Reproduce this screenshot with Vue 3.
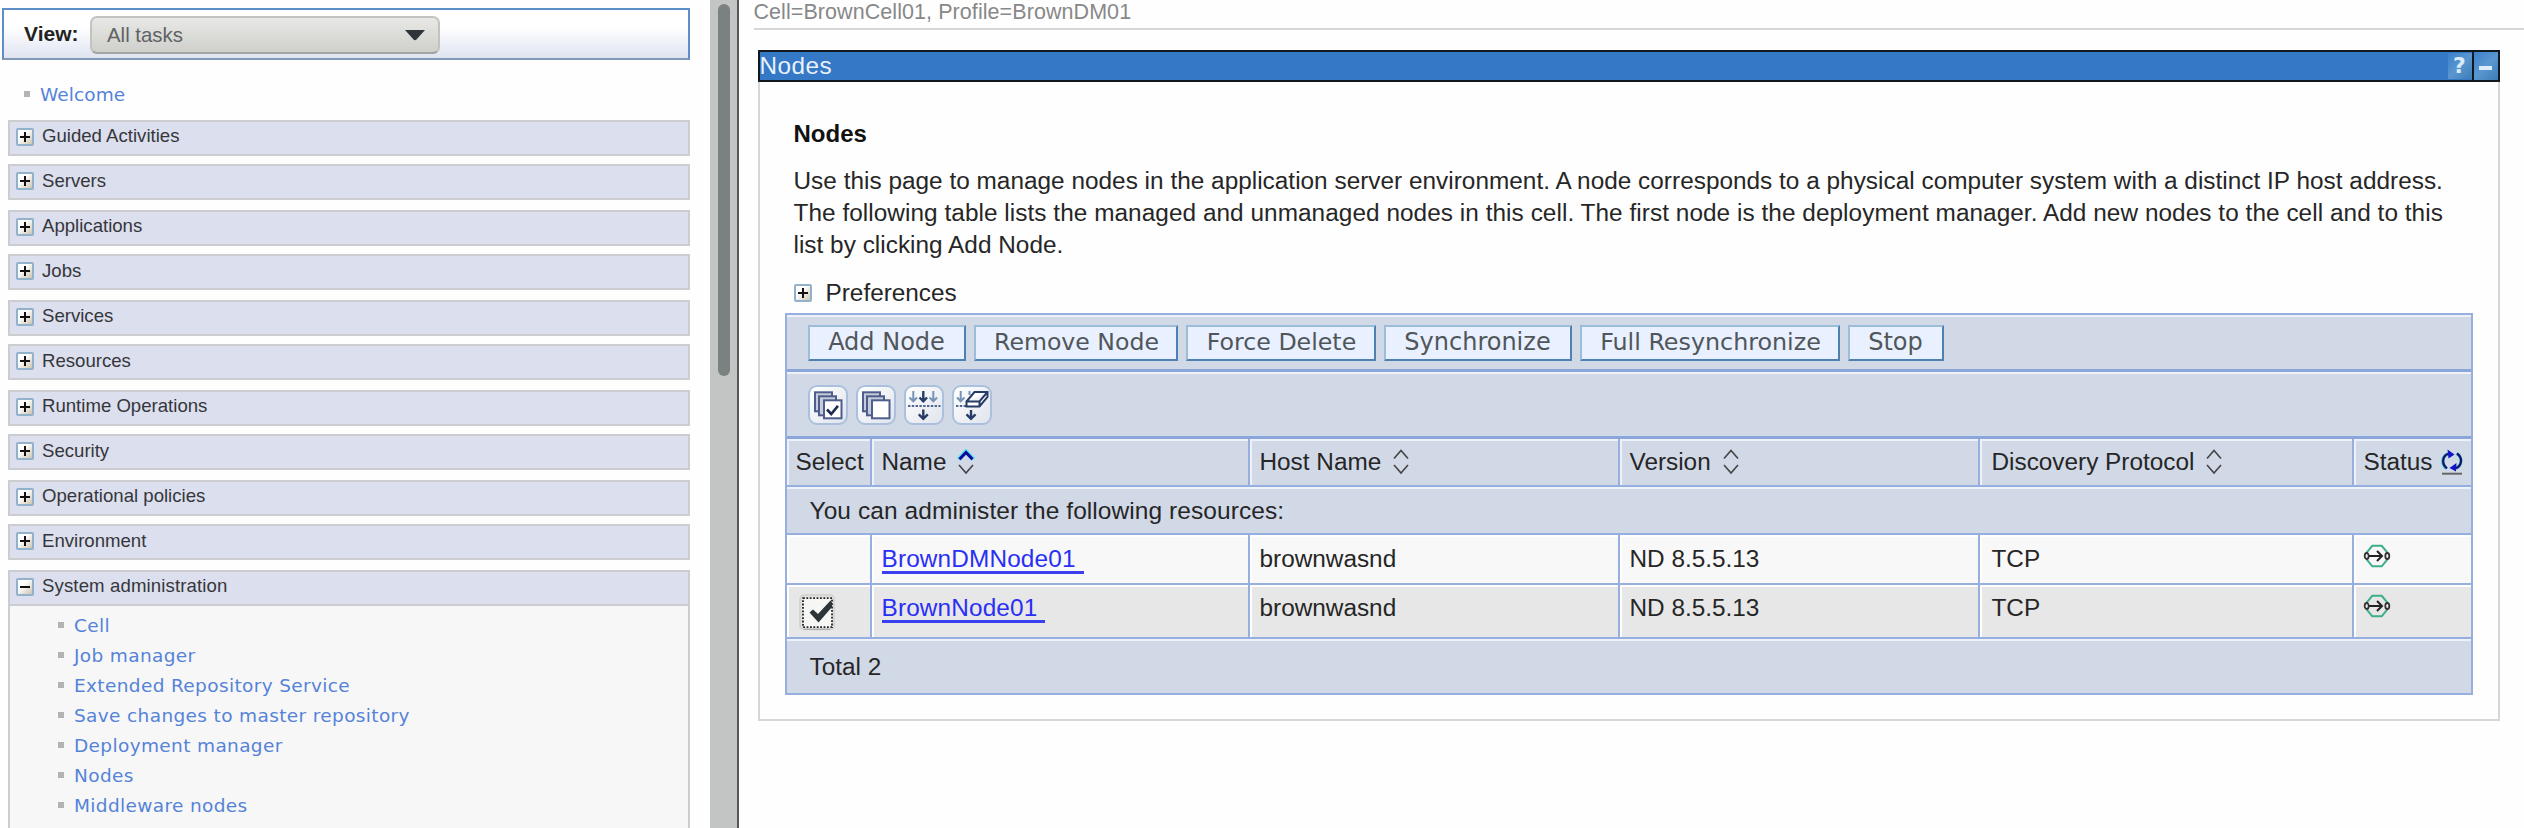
<script setup>
const sections = [
  'Guided Activities', 'Servers', 'Applications', 'Jobs', 'Services', 'Resources',
  'Runtime Operations', 'Security', 'Operational policies', 'Environment',
]
const adminLinks = [
  'Cell', 'Job manager', 'Extended Repository Service', 'Save changes to master repository',
  'Deployment manager', 'Nodes', 'Middleware nodes', 'Node agents',
]
const actions = [
  { label: 'Add Node', cls: 'w-add' },
  { label: 'Remove Node', cls: 'w-remove' },
  { label: 'Force Delete', cls: 'w-force' },
  { label: 'Synchronize', cls: 'w-sync' },
  { label: 'Full Resynchronize', cls: 'w-full' },
  { label: 'Stop', cls: 'w-stop' },
]
const columns = ['Name', 'Host Name', 'Version', 'Discovery Protocol']
const nodes = [
  { name: 'BrownDMNode01', host: 'brownwasnd', version: 'ND 8.5.5.13', protocol: 'TCP', checked: false },
  { name: 'BrownNode01', host: 'brownwasnd', version: 'ND 8.5.5.13', protocol: 'TCP', checked: true },
]
</script>

<template>
  <div class="page">
    <aside class="sidebar">
      <div class="view">
        <span class="view-label">View:</span>
        <div class="select">
          <span>All tasks</span>
          <svg width="20" height="11" viewBox="0 0 20 11"><path d="M0 0H20L11.5 9.5Q10 11 8.5 9.5Z" fill="#2f3639" /></svg>
        </div>
      </div>
      <div class="welcome"><i class="bullet"></i><a>Welcome</a></div>
      <div v-for="(s, i) in sections" :key="s" class="bar" :class="{ odd: i % 2 }">
        <span class="toggle"></span><span class="bar-text">{{ s }}</span>
      </div>
      <div class="group">
        <div class="bar open"><span class="toggle minus"></span><span class="bar-text">System administration</span></div>
        <ul class="links">
          <li v-for="l in adminLinks" :key="l"><i class="bullet"></i><a>{{ l }}</a></li>
        </ul>
      </div>
    </aside>

    <div class="scroll"><div class="thumb"></div></div>

    <main class="main">
      <div class="crumb">Cell=BrownCell01, Profile=BrownDM01</div>
      <section class="panel">
        <header class="title">
          <span class="title-text">Nodes</span>
          <span class="tbtn help">?</span>
          <span class="tbtn collapse"><i></i></span>
        </header>
        <div class="body">
          <h1>Nodes</h1>
          <p>
            <span>Use this page to manage nodes in the application server environment. A node corresponds to a physical computer system with a distinct IP host address.</span>
            <span class="l2">The following table lists the managed and unmanaged nodes in this cell. The first node is the deployment manager. Add new nodes to the cell and to this</span>
            <span>list by clicking Add Node.</span>
          </p>
          <div class="pref"><span class="toggle"></span><span>Preferences</span></div>

          <div class="table">
            <div class="row buttons">
              <button v-for="a in actions" :key="a.label" :class="a.cls">{{ a.label }}</button>
            </div>
            <div class="row tools">
              <svg v-for="k in 2" :key="k" class="tool" width="36" height="36" viewBox="2 2 36 36">
                <g fill="#c6ccdc" stroke="#4e5d8a" stroke-width="2">
                  <rect x="7" y="7.3" width="17" height="19" />
                  <rect x="11" y="11.3" width="17" height="19" />
                  <rect x="16" y="15.3" width="17.5" height="18" fill="#fff" />
                </g>
                <path v-if="k === 1" d="M19 24.5L23.2 29L30 20.8" fill="none" stroke="#1d2b50" stroke-width="2.6" />
              </svg>
              <svg class="tool" width="36" height="36" viewBox="2 2 36 36" fill="none" stroke-width="2">
                <path d="M9.3 6V16M5.5 12.5L9.3 16.3L13 12.5M29.3 6V16M25.6 12.5L29.3 16.3L33.1 12.5" stroke="#7793b6" />
                <path d="M19.3 6V16M15.5 12.5L19.3 16.3L23.1 12.5M19.3 24.5V34M14.8 29.3L19.3 33.8L23.8 29.3" stroke="#263c66" stroke-width="2.4" />
                <path d="M4 21H36.5" stroke="#4f6690" stroke-dasharray="2.4 1.4" />
              </svg>
              <svg class="tool" width="36" height="36" viewBox="2 2 36 36" fill="none" stroke-width="2">
                <path d="M8.7 6V16M5 12.5L8.7 16.3L12.4 12.5M17.5 6V10" stroke="#7793b6" />
                <path d="M4 21H14" stroke="#4f6690" stroke-dasharray="2.4 1.4" />
                <path d="M14.5 16.5L22.5 7H35.5V12L27.5 21.5H14.5ZM14.5 16.5H27.5L35.5 7M27.5 16.5V21.5" fill="#fff" stroke="#263c66" />
                <path d="M19 25V34M14.5 29.3L19 33.8L23.5 29.3" stroke="#263c66" stroke-width="2.4" />
              </svg>
            </div>
            <div class="row grid head">
              <div class="cell sel">Select</div>
              <div v-for="(c, i) in columns" :key="c" class="cell">
                <span>{{ c }}</span>
                <svg class="sort" width="18" height="26" viewBox="0 0 18 26" fill="none">
                  <template v-if="i === 0">
                    <path d="M1.5 10.5L9 2.5L16.5 10.5" stroke="#5fe0ee" stroke-width="4.5" />
                    <path d="M2.5 10.3L9 3.5L15.5 10.3" stroke="#0a0a9c" stroke-width="3" />
                  </template>
                  <path v-else d="M2 9.5L9 1.5L16 9.5" stroke="#444" stroke-width="1.6" />
                  <path d="M2 16L9 24L16 16" stroke="#444" stroke-width="1.6" />
                </svg>
              </div>
              <div class="cell status">
                <span>Status</span>
                <svg class="refresh" width="22" height="26" viewBox="0 0 22 26" fill="none">
                  <path d="M5.5 19.5C0 15 .5 7.5 7 4.8M15.5 4.5C22 8.5 21 16.5 15 19.2" stroke="#35c3d6" stroke-width="3" />
                  <path d="M6 19.5C.5 15 1 7.5 7 4.8M16 4.5C22 8.5 21 16.5 15 19.2" stroke="#14146a" stroke-width="2.2" />
                  <path d="M6.5 .5L13.5 5.5L7.5 9.5ZM15.5 14L8.5 19L15 22.5Z" fill="#1212c8" />
                  <path d="M1 24.7H21" stroke="#666" stroke-width="2" />
                </svg>
              </div>
            </div>
            <div class="row note">You can administer the following resources:</div>
            <div v-for="n in nodes" :key="n.name" class="row grid data" :class="{ alt: n.checked }">
              <div class="cell sel">
                <svg v-if="n.checked" class="check" width="36" height="37" viewBox="0 0 36 37">
                  <rect x="1" y="1" width="34" height="34.5" rx="4" fill="#e2e2e0" stroke="#cfcfcd" stroke-width="1.5" />
                  <rect x="4" y="4" width="29" height="29.5" rx="2" fill="#f6f6f5" />
                  <path d="M5 35.3H31" stroke="#aaa" stroke-width="1.2" />
                  <rect x="4" y="4.2" width="29" height="29" fill="none" stroke="#222" stroke-width="1.8" stroke-dasharray="1.8 1.6" />
                  <path d="M10.5 18.5L14 15.5L19 20L31.5 6.5L33 8.5V13L19.5 28.5Z" fill="#2d3538" />
                </svg>
              </div>
              <div class="cell"><a class="node">{{ n.name }}</a></div>
              <div class="cell">{{ n.host }}</div>
              <div class="cell">{{ n.version }}</div>
              <div class="cell">{{ n.protocol }}</div>
              <div class="cell status">
                <svg class="state" width="28" height="24" viewBox="0 0 28 24" fill="none">
                  <path d="M9.3 1.8H18.7L24 8V16L18.7 22.3H9.3L4 16V8Z" stroke="#3eae86" stroke-width="2" />
                  <path d="M6 12H18.5M14 7L19 12L14 17" stroke="#222" stroke-width="2" />
                  <ellipse cx="3.7" cy="12" rx="2" ry="3" fill="#f2f2f2" stroke="#333" stroke-width="1.8" />
                  <ellipse cx="24.3" cy="12" rx="2" ry="3" fill="#f2f2f2" stroke="#333" stroke-width="1.8" />
                </svg>
              </div>
            </div>
            <div class="row total">Total 2</div>
          </div>
        </div>
      </section>
    </main>
  </div>
</template>

<style>
body { background: #fff; }
</style>

<style scoped>
.page { display: flex; width: 2524px; height: 828px; overflow: hidden; font-family: "Liberation Sans", Arial, sans-serif; color: #262626; background: #fefefe; }
.page * { box-sizing: border-box; }
.sidebar { width: 710px; flex: none; padding-top: 8px; overflow: hidden; }
.view { display: flex; align-items: center; width: 688px; height: 52px; margin-left: 2px; padding-left: 20px; border: 2px solid #5b8fc6; border-bottom-color: #8298b8; background: linear-gradient(#fff 35%, #dfe4f1); }
.view-label { width: 66px; font-weight: bold; font-size: 21px; line-height: 26px; color: #222; }
.select { display: flex; align-items: center; justify-content: space-between; width: 350px; height: 38px; margin-top: 2px; padding: 0 13px 0 15px; border: 2px solid #c3c3bf; border-bottom-color: #a3a39f; border-radius: 7px; background: linear-gradient(#e8e8e6, #cfcfcb); font-size: 20.4px; color: #5e6365; }
.welcome { display: flex; align-items: center; height: 60px; padding: 9px 0 0 24px; }
.welcome, .links { font-family: "DejaVu Sans", sans-serif; font-size: 18.5px; letter-spacing: .36px; color: #5583d8; }
.welcome { letter-spacing: .1px; }
.bullet { flex: none; width: 6px; height: 6px; margin-right: 10px; background: #b3b3b3; }
.welcome .bullet { margin-bottom: 2px; }
.bar { display: flex; width: 682px; height: 36px; margin: 0 0 8px 8px; border: 2px solid #cdcdd1; background: #dbdfee; font-size: 18.6px; line-height: 26px; color: #36363a; }
.bar.odd { margin-bottom: 10px; }
.bar-text { margin: 1px 0 0 8px; }
.odd .bar-text { margin-top: 2px; }
.toggle { position: relative; flex: none; width: 18px; height: 18px; margin: 6px 0 0 6px; border: 2px solid #92b2cc; border-radius: 2px; background: linear-gradient(135deg, #fff 35%, #cdc5b0); }
.toggle::before, .toggle:not(.minus)::after { content: ""; position: absolute; left: 2px; top: 6px; width: 10px; height: 2px; background: #111; }
.toggle:not(.minus)::after { transform: rotate(90deg); }
.group { width: 682px; height: 300px; margin-left: 8px; border: 2px solid #cdcdd1; border-top: 0; background: #f7f7f7; }
.bar.open { width: 682px; margin: 0 0 0 -2px; letter-spacing: .12px; }
.links { margin: 4px 0 0; padding: 0 0 0 48px; list-style: none; }
.links li { display: flex; align-items: center; height: 30px; white-space: nowrap; }
.links .bullet { margin-bottom: 1px; }

.scroll { width: 28.5px; flex: none; padding: 4px 0 0 8px; border-right: 2.5px solid #555a59; background: #c3c5c4; }
.thumb { width: 12px; height: 372px; border-radius: 6px; background: #7b8181; }

.main { flex: 1; min-width: 0; padding-left: 15px; }
.crumb { height: 30px; border-bottom: 2px solid #d6d6d6; font-size: 21.5px; line-height: 25px; letter-spacing: .07px; color: #888; }
.panel { width: 1742px; height: 671px; margin: 20px 0 0 4px; border: 2px solid #d6d6d6; border-top: 0; }
.title { display: flex; align-items: stretch; width: 1742px; height: 32px; margin-left: -2px; border: 2px solid #101820; background: #3578c6; color: #e9f1fb; }
.title-text { flex: 1; font-size: 24.3px; line-height: 27px; letter-spacing: .5px; }
.tbtn { width: 24px; margin: 1px 0; background: linear-gradient(135deg, #3b80cb, #5a97d0 50%, #3d7cb8); }
.help { width: 24px; font: bold 22px/25px "DejaVu Sans", sans-serif; text-align: center; color: #dcebfa; }
.collapse { display: flex; align-items: center; justify-content: center; width: 26px; margin: 0; border-left: 2px solid #101820; }
.collapse i { width: 13px; height: 4px; margin-top: 4px; background: #dcebfa; }
.body { padding: 34px 25px 0; font-size: 24.35px; line-height: 32px; white-space: nowrap; }
h1 { margin: 0 0 0 9px; font-size: 24px; line-height: 36px; color: #111; }
p { margin: 13px 0 0 9px; letter-spacing: .02px; }
p span { display: block; }
.l2 { letter-spacing: .055px; }
.pref { display: flex; height: 52px; padding: 16px 0 0 3px; }
.pref .toggle { margin: 7px 14px 0 6px; }

.table { width: 1688px; border: 2px solid #96afde; background: #d2d9e6; }
.row { border-bottom: 2px solid #96afde; background: #d2d9e6; box-shadow: inset 0 2px #eef1f8; }
.buttons { display: flex; gap: 8px; height: 57px; padding: 10px 0 0 21px; border-bottom: 3px solid #8aa6da; }
.tools { display: flex; gap: 8px; height: 67px; padding: 13px 0 0 21px; border-bottom: 3px solid #8aa6da; }
button { height: 36px; padding: 0 0 1px; border: solid; border-width: 2px; border-color: #9cbdda #5080b2 #5080b2 #9cbdda; background: #e9f0ff; font: 24px/29px "DejaVu Sans", sans-serif; color: #50565a; }
.w-add { width: 158px; }
.w-remove { width: 204px; padding-left: 2px; font-size: 23.6px; }
.w-force { width: 190px; padding-left: 2px; font-size: 23.7px; }
.w-sync { width: 188px; }
.w-full { width: 260px; padding-left: 2px; font-size: 23.8px; }
.w-stop { width: 96px; }
.tool { box-sizing: content-box !important; border: 2px solid #abc0dc; border-radius: 9px; background: linear-gradient(135deg, #fff, #e0e4ed); }
.grid { display: grid; grid-template-columns: 85px 378px 370px 360px 374px 1fr; }
.head { height: 48px; }
.cell { padding: 8px 0 0 10px; border-right: 2px solid #96afde; box-shadow: inset 2px 2px #eef1f8; }
.cell:nth-child(5) { padding-left: 12px; }
.cell.status { padding-left: 10px; border-right: 0; }
.head .cell { display: flex; padding-top: 7px; }
.cell.sel { padding-left: 9px; }
.head .sel { letter-spacing: .1px; }
.sort { margin: 3px 0 0 11px; }
.refresh { margin: 3px 0 0 8px; }
.note { height: 48px; padding: 8px 0 0 23px; font-size: 24.5px; letter-spacing: .07px; }
.data { height: 50px; background: #f8f8f8; box-shadow: none; }
.data .cell { box-shadow: inset 2px 2px #fff; }
.alt { height: 54px; background: #e7e7e7; }
.alt .cell { padding-top: 7px; }
.data .cell.sel { padding-left: 8px; }
.alt .check { display: block; margin: 2px 0 0 4px; }
.node { display: inline-block; height: 31px; padding-right: 8px; border-bottom: 3px solid #3a40f0; letter-spacing: .15px; color: #2a2ff5; line-height: 32px; }
.state { display: block; margin: 1px 0 0 -1px; }
.alt .state { margin-top: 2px; }
.total { height: 54px; padding: 12px 0 0 23px; border-bottom: 0; }
</style>
